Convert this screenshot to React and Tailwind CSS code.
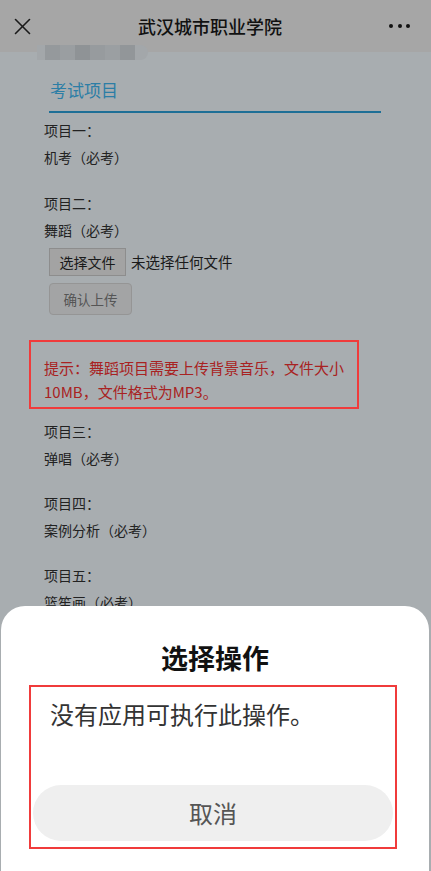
import React from "react";

const FONT = { fontFamily: '"Noto Sans CJK SC", "Noto Sans", sans-serif' };

const GROUPS_TOP = [
  { label: "项目一：", value: "机考（必考）" },
];

const GROUPS_BOTTOM = [
  { label: "项目三：", value: "弹唱（必考）" },
  { label: "项目四：", value: "案例分析（必考）" },
  { label: "项目五：", value: "篮笙画（必考）" },
];

function Item({ label, value, className = "" }) {
  return (
    <div className={`text-[14px] leading-[27px] text-[#222] ${className}`}>
      <div>{label}</div>
      <div>{value}</div>
    </div>
  );
}

export default function App() {
  return (
    <div className="relative h-[871px] w-[431px] overflow-hidden bg-[#a8adb0]" style={FONT}>
      {/* top bar */}
      <header className="flex h-[52px] items-center justify-between bg-[#a6a6a6] pl-[14px] pr-[21px]">
        <svg width="17" height="17" viewBox="0 0 17 17" fill="none" stroke="#1a1a1a" strokeWidth="1.6" strokeLinecap="round">
          <line x1="1.5" y1="1.5" x2="15.5" y2="15.5" />
          <line x1="15.5" y1="1.5" x2="1.5" y2="15.5" />
        </svg>
        <div className="text-[18px] font-medium leading-[24px] text-[#111]">武汉城市职业学院</div>
        <div className="flex items-center gap-[4.5px]">
          <span className="h-[4px] w-[4px] rounded-full bg-[#111]" />
          <span className="h-[4px] w-[4px] rounded-full bg-[#111]" />
          <span className="h-[4px] w-[4px] rounded-full bg-[#111]" />
        </div>
      </header>

      {/* blurred tag */}
      <div className="absolute left-[37px] top-[45px] flex h-[15px] w-[111px] items-center rounded-r-full bg-[#a3a7aa] pl-[8px]">
        <span className="h-[15px] w-[15px] bg-[#95999c]" />
        <span className="h-[15px] w-[15px] bg-[#9a9ea1]" />
        <span className="h-[15px] w-[15px] bg-[#8f9396]" />
        <span className="h-[15px] w-[15px] bg-[#979b9e]" />
        <span className="h-[15px] w-[15px] bg-[#9b9fa2]" />
        <span className="h-[15px] w-[15px] bg-[#929699]" />
      </div>

      <div className="pt-[26px]">
        <div className="ml-[49px] w-[332px] border-b-2 border-[#1e6f96] pb-[9px] pl-[1px] text-[17px] leading-[24px] text-[#2c7ea6]">
          考试项目
        </div>

        <div className="px-[44px] pt-[4px]">
          {GROUPS_TOP.map((g) => (
            <Item key={g.label} {...g} />
          ))}

          <Item label="项目二：" value="舞蹈（必考）" className="mt-[19px]" />
          <div className="ml-[5px] mt-[4px] flex items-center gap-[5px]">
            <div className="flex h-[28px] w-[77px] items-center justify-center border border-[#8d8d8d] bg-[#a3a3a3] text-[14px] text-[#1a1a1a]">
              选择文件
            </div>
            <span className="text-[14.5px] text-[#1a1a1a]">未选择任何文件</span>
          </div>
          <div className="ml-[5px] mt-[7px] flex h-[32px] w-[83px] items-center justify-center rounded-[4px] border border-[#959595] bg-[#a3a4a5] text-[13.5px] text-[#555]">
            确认上传
          </div>

          <div className="-ml-[15px] mt-[25px] w-[330px] border-2 border-[#f03b3b] pb-[3px] pl-[13px] pr-[2px] pt-[14px] text-[15px] leading-[24px] text-[#a82222]">
            提示：舞蹈项目需要上传背景音乐，文件大小10MB，文件格式为MP3。
          </div>

          {GROUPS_BOTTOM.map((g, i) => (
            <Item key={g.label} {...g} className={i === 0 ? "mt-[9px]" : "mt-[18px]"} />
          ))}
        </div>
      </div>

      {/* action sheet */}
      <div className="absolute bottom-0 left-[1px] right-[2px] h-[265px] rounded-t-[24px] bg-white">
        <div className="pt-[34px] text-center text-[27px] font-bold leading-[36px] text-[#111]">选择操作</div>
        <div className="ml-[28px] mt-[9px] w-[368px] border-2 border-[#f03b3b] px-[2px] pb-[6px] pt-[11px]">
          <div className="pl-[17px] text-[24px] leading-[32px] text-[#333]">没有应用可执行此操作。</div>
          <div className="mt-[55px] flex h-[56px] items-center justify-center rounded-full bg-[#efefef] text-[24px] text-[#555]">
            取消
          </div>
        </div>
      </div>
    </div>
  );
}
